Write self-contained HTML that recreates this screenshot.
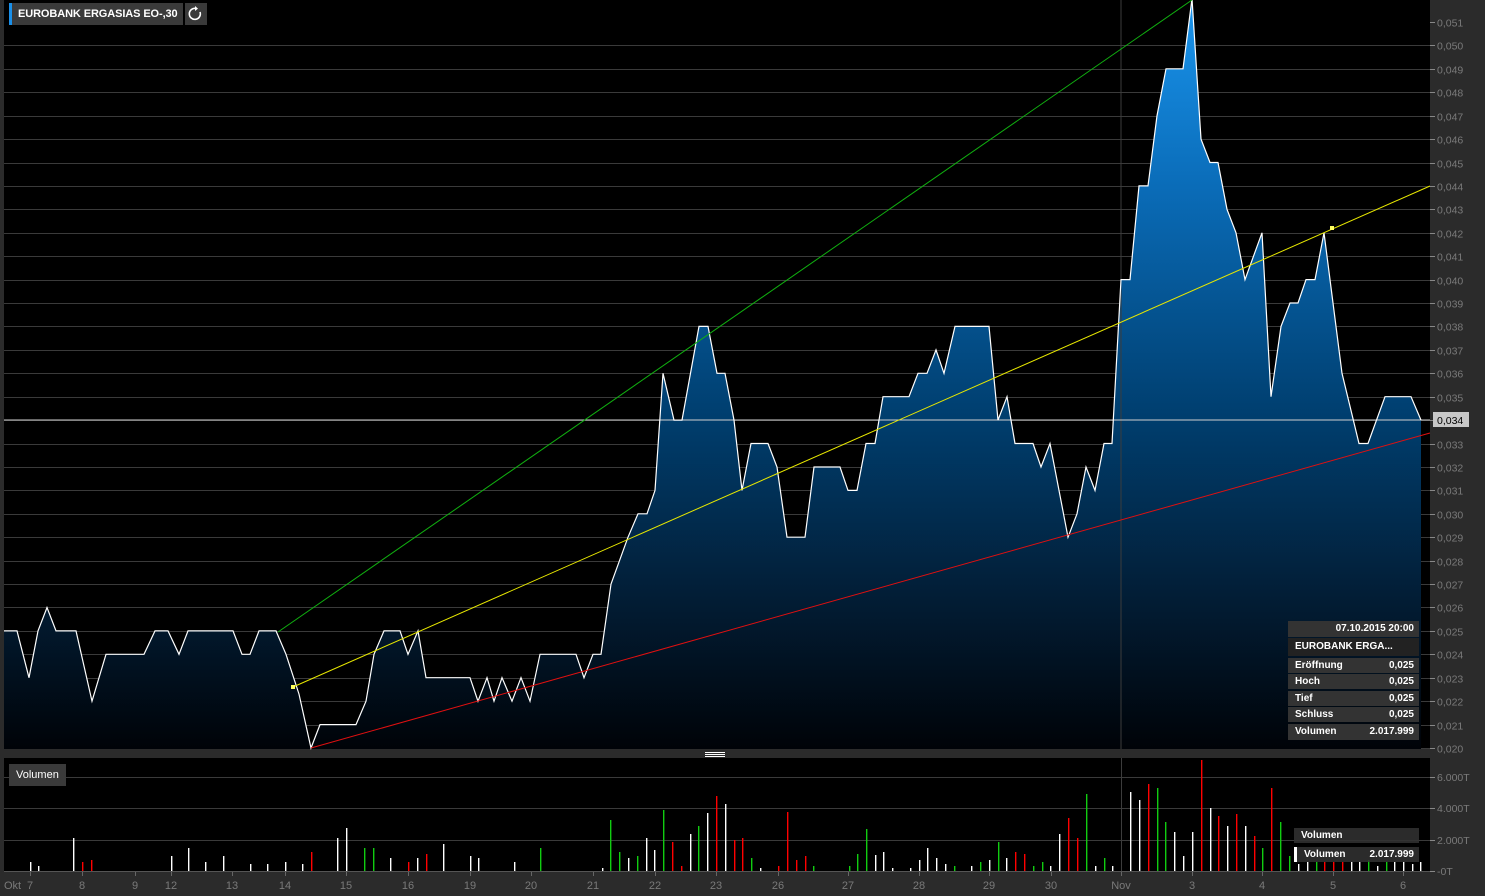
<!DOCTYPE html>
<html><head><meta charset="utf-8">
<style>
html,body{margin:0;padding:0;background:#2b2b2b;width:1485px;height:896px;overflow:hidden;font-family:"Liberation Sans",sans-serif}
#wrap{position:relative;width:1485px;height:896px}
svg{position:absolute;left:0;top:0}
.tag{position:absolute;background:#3a3a3a;color:#fff;font-size:11px;font-weight:bold;line-height:22px;height:22px;white-space:nowrap}
.r{background:#333;height:15px;line-height:15px;padding:0 5px 0 7px;margin-bottom:1.6px;display:flex;justify-content:space-between}
</style></head><body><div id="wrap">
<svg id="s" width="1485" height="896" xmlns="http://www.w3.org/2000/svg">
<defs>
<linearGradient id="g" x1="0" y1="0" x2="0" y2="748" gradientUnits="userSpaceOnUse">
<stop offset="0" stop-color="#1a95ee"/>
<stop offset="0.25" stop-color="#0a6cb8"/>
<stop offset="0.55" stop-color="#003f70"/>
<stop offset="0.8" stop-color="#021d35"/>
<stop offset="1" stop-color="#000308"/>
</linearGradient>
</defs>
<rect x="4" y="0" width="1426" height="749" fill="#000"/>
<rect x="4" y="758" width="1426" height="114" fill="#000"/>
<g id="grid"></g>
<path id="area" fill="url(#g)"/>
<line x1="1121" y1="0" x2="1121" y2="749" stroke="#3c3c3c"/>
<line x1="4" y1="420" x2="1430" y2="420" stroke="#cfcfcf" stroke-width="1"/>
<path id="line" fill="none" stroke="#fff" stroke-width="1.2"/>
<line x1="278" y1="632" x2="1192" y2="0" stroke="#10b010" stroke-width="1"/>
<line x1="293" y1="687" x2="1430" y2="186" stroke="#e8e800" stroke-width="1"/>
<line x1="311" y1="748" x2="1430" y2="433" stroke="#e01010" stroke-width="1"/>
<rect x="291" y="685" width="4" height="4" fill="#ffff60"/>
<rect x="1330" y="226" width="4" height="4" fill="#ffff60"/>
<g id="vol"></g>
<g id="axis"></g>
<rect x="705" y="752" width="20" height="1" fill="#fff"/>
<rect x="705" y="754" width="20" height="1" fill="#fff"/>
<rect x="705" y="756" width="20" height="1" fill="#fff"/>
</svg>
<div class="tag" style="left:9px;top:3px;width:174px;border-left:3px solid #1a8fe8;padding-left:6px;box-sizing:border-box;font-size:11px;letter-spacing:-0.1px">EUROBANK ERGASIAS EO-,30</div>
<div class="tag" style="left:185px;top:3px;width:22px;text-align:center"><svg width="22" height="22" style="position:static"><path d="M15 9 A5.5 5.5 0 1 1 11 5.5" fill="none" stroke="#fff" stroke-width="1.6"/><path d="M10 3 L13 5.6 L10 8 Z" fill="#fff"/></svg></div>
<div class="tag" style="left:9px;top:764px;padding:0 7px;font-weight:normal;font-size:11px">Volumen</div>
<div style="position:absolute;left:1288px;top:621px;width:131px;font-size:10px;font-weight:bold;color:#fff">
<div style="background:#333;height:16px;line-height:16px;text-align:right;padding-right:5px;margin-bottom:1px">07.10.2015 20:00</div>
<div style="background:#222;height:18px;line-height:18px;padding-left:7px;margin-bottom:1.6px">EUROBANK ERGA...</div>
<div class="r"><span>Eröffnung</span><span>0,025</span></div>
<div class="r"><span>Hoch</span><span>0,025</span></div>
<div class="r"><span>Tief</span><span>0,025</span></div>
<div class="r"><span>Schluss</span><span>0,025</span></div>
<div class="r" style="height:16px;line-height:16px"><span>Volumen</span><span>2.017.999</span></div>
</div>
<div style="position:absolute;left:1294px;top:828px;width:125px;font-size:10px;font-weight:bold;color:#fff">
<div style="background:rgba(50,50,50,0.85);height:15px;line-height:15px;padding-left:7px;margin-bottom:4px">Volumen</div>
<div style="background:rgba(50,50,50,0.85);height:15px;line-height:15px;padding:0 5px 0 7px;display:flex;justify-content:space-between;border-left:3px solid #fff"><span>Volumen</span><span>2.017.999</span></div>
</div>
</div>
<script>
var NS="http://www.w3.org/2000/svg";
function el(p,t,a,txt){var e=document.createElementNS(NS,t);for(var k in a)e.setAttribute(k,a[k]);if(txt!=null)e.textContent=txt;p.appendChild(e);return e;}
function Y(p){return 748-(p-0.020)*1000*23.42;}
var grid=document.getElementById('grid'),axis=document.getElementById('axis');
for(var i=0;i<=31;i++){var y=Math.round(Y(0.020+i*0.001))+0.5;
 if(i<31) el(grid,'line',{x1:4,y1:y,x2:1430,y2:y,stroke:'#3a3a3a'});
 el(axis,'line',{x1:1430,y1:y,x2:1435,y2:y,stroke:'#888'});
 if(i!=14) el(axis,'text',{x:1437,y:y+4,fill:'#7a7a7a','font-size':'10.5','font-family':'Liberation Sans'},'0,0'+(20+i));}
el(axis,'rect',{x:1433,y:412,width:36,height:15,fill:'#c8c8c8'});
el(axis,'text',{x:1437,y:424,fill:'#000','font-size':'10.5','font-family':'Liberation Sans'},'0,034');
[[777,'6.000T'],[808,'4.000T'],[840,'2.000T'],[871,'-0T']].forEach(function(v){
 if(v[0]<871) el(grid,'line',{x1:4,y1:v[0]+.5,x2:1430,y2:v[0]+.5,stroke:'#3a3a3a'});
 el(axis,'line',{x1:1430,y1:v[0]+.5,x2:1435,y2:v[0]+.5,stroke:'#888'});
 el(axis,'text',{x:1437,y:v[0]+4,fill:'#7a7a7a','font-size':'10.5','font-family':'Liberation Sans'},v[1]);});
el(grid,'line',{x1:4,y1:871.5,x2:1430,y2:871.5,stroke:'#555'});
var pts=[[4,25],[17,25],[29,23],[38,25],[47,26],[56,25],[76,25],[92,22],[106,24],[144,24],[155,25],[168,25],[179,24],[188,25],[233,25],[242,24],[250,24],[259,25],[276,25],[286,24],[299,22.3],[311,20],[320,21],[356,21],[366,22],[374,24],[384,25],[400,25],[408,24],[418,25],[426,23],[470,23],[478,22],[487,23],[494,22],[502,23],[512,22],[521,23],[530,22],[540,24],[576,24],[584,23],[593,24],[601,24],[611,27],[628,29],[638,30],[647,30],[655,31],[663,36],[674,34],[682,34],[699,38],[708,38],[717,36],[725,36],[734,34],[742,31],[751,33],[768,33],[777,32],[787,29],[805,29],[814,32],[840,32],[848,31],[857,31],[866,33],[875,33],[883,35],[909,35],[918,36],[927,36],[936,37],[944,36],[955,38],[989,38],[998,34],[1007,35],[1015,33],[1033,33],[1041,32],[1050,33],[1059,31],[1068,29],[1077,30],[1086,32],[1095,31],[1104,33],[1112,33],[1121,40],[1130,40],[1139,44],[1148,44],[1157,47],[1166,49],[1183,49],[1192,52],[1201,46],[1210,45],[1218,45],[1227,43],[1236,42],[1245,40],[1262,42],[1271,35],[1281,38],[1290,39],[1298,39],[1306,40],[1315,40],[1324,42],[1333,39],[1342,36],[1359,33],[1368,33],[1385,35],[1411,35],[1421,34]];
var d='';pts.forEach(function(p,i){d+=(i?'L':'M')+p[0]+' '+Y(p[1]/1000).toFixed(1)+' ';});
document.getElementById('line').setAttribute('d',d);
document.getElementById('area').setAttribute('d',d+'L1421 749 L4 749 Z');
var C={w:'#fff',r:'#f00',g:'#1c1'};
var bars=[[30,862,'w'],[38,866,'w'],[73,838,'w'],[82,862,'r'],[91,860,'r'],[171,856,'w'],[188,848,'w'],[205,862,'w'],[223,856,'w'],[250,864,'w'],[267,864,'w'],[285,862,'w'],[302,864,'w'],[311,852,'r'],[337,838,'w'],[346,828,'w'],[364,848,'g'],[373,848,'g'],[390,858,'w'],[408,862,'r'],[417,858,'w'],[426,854,'r'],[443,844,'w'],[470,856,'w'],[478,858,'w'],[514,862,'w'],[540,848,'g'],[602,868,'w'],[610,820,'g'],[619,852,'g'],[628,858,'w'],[637,856,'g'],[646,838,'w'],[654,850,'w'],[663,810,'g'],[672,842,'r'],[681,866,'r'],[690,834,'w'],[698,826,'g'],[707,813,'w'],[716,796,'r'],[725,804,'w'],[734,840,'r'],[742,838,'r'],[751,858,'g'],[760,868,'w'],[778,866,'r'],[787,812,'r'],[796,860,'r'],[805,856,'r'],[813,866,'g'],[849,866,'g'],[857,854,'g'],[866,829,'g'],[875,855,'w'],[883,852,'w'],[892,868,'w'],[910,868,'w'],[919,860,'w'],[927,848,'w'],[936,858,'w'],[945,864,'w'],[954,866,'g'],[971,866,'w'],[980,862,'g'],[989,860,'w'],[998,842,'g'],[1006,858,'w'],[1015,852,'r'],[1024,854,'r'],[1033,866,'g'],[1042,862,'g'],[1050,866,'w'],[1059,834,'w'],[1068,818,'r'],[1077,838,'r'],[1086,794,'g'],[1095,866,'w'],[1104,858,'g'],[1112,866,'w'],[1130,792,'w'],[1139,800,'w'],[1148,784,'r'],[1157,788,'g'],[1165,822,'g'],[1174,832,'w'],[1183,856,'w'],[1192,832,'w'],[1201,760,'r'],[1210,808,'w'],[1218,816,'r'],[1227,826,'w'],[1236,814,'r'],[1245,826,'w'],[1254,836,'r'],[1262,848,'g'],[1271,788,'r'],[1280,822,'g'],[1289,856,'g'],[1298,864,'w'],[1307,862,'w'],[1316,862,'g'],[1324,862,'r'],[1333,862,'r'],[1342,862,'r'],[1351,862,'w'],[1359,862,'w'],[1368,860,'g'],[1377,866,'w'],[1386,862,'g'],[1394,862,'w'],[1403,862,'w'],[1412,864,'w'],[1420,862,'w']];
var vol=document.getElementById('vol');
el(vol,'line',{x1:1121.5,y1:758,x2:1121.5,y2:871,stroke:'#3c3c3c'});
bars.forEach(function(b){el(vol,'rect',{x:b[0],y:b[1],width:1.4,height:871-b[1],fill:C[b[2]]});});
[[30,'7'],[82,'8'],[135,'9'],[171,'12'],[232,'13'],[285,'14'],[346,'15'],[408,'16'],[470,'19'],[531,'20'],[593,'21'],[655,'22'],[716,'23'],[778,'26'],[848,'27'],[919,'28'],[989,'29'],[1051,'30'],[1121,'Nov'],[1192,'3'],[1262,'4'],[1333,'5'],[1403,'6']].forEach(function(t){
 el(axis,'line',{x1:t[0]+.5,y1:872,x2:t[0]+.5,y2:876,stroke:'#666'});
 el(axis,'text',{x:t[0],y:889,fill:'#7a7a7a','font-size':'11','font-family':'Liberation Sans','text-anchor':'middle'},t[1]);});
el(axis,'text',{x:4,y:889,fill:'#7a7a7a','font-size':'11','font-family':'Liberation Sans'},'Okt');
</script>
</body></html>
